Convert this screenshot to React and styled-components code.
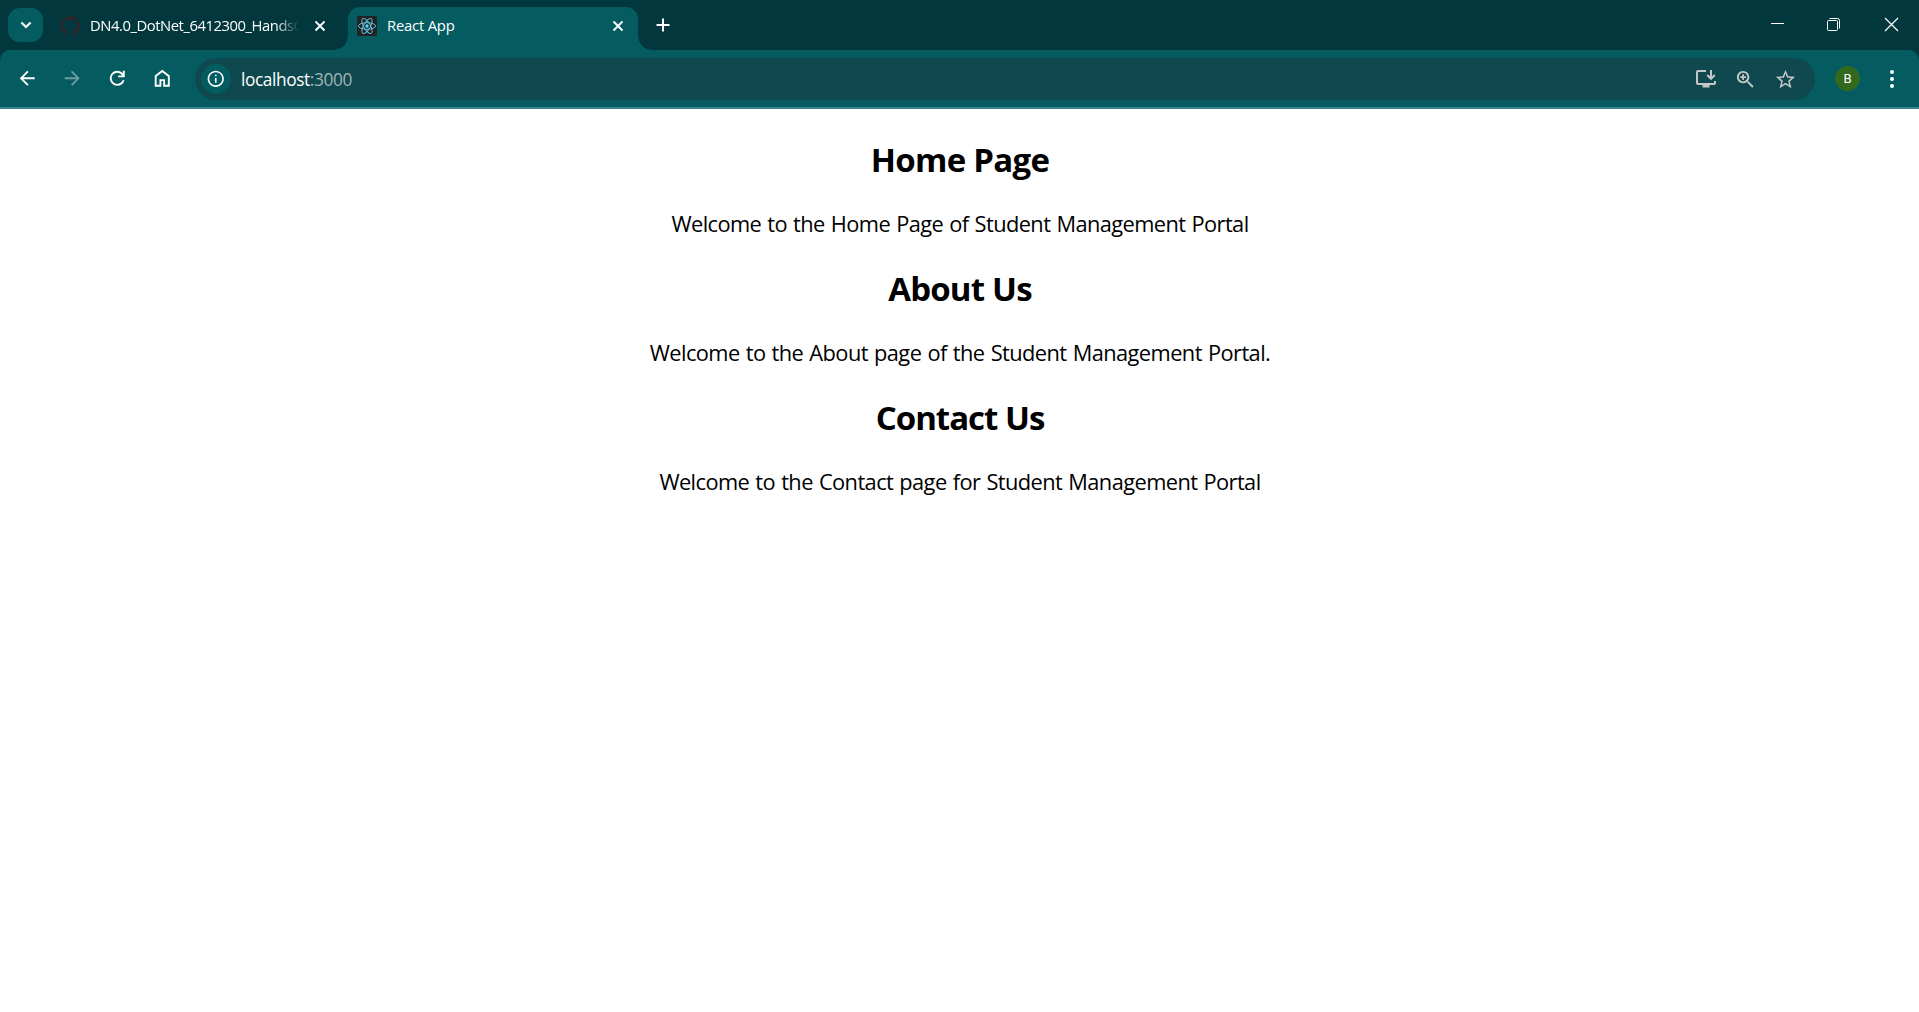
import React from "react";
import styled, { createGlobalStyle, css } from "styled-components";

const FRAME = "#02383d";
const BAR = "#045c61";
const FIELD = "#0f484e";
const UI_FONT = '"Open Sans", "Noto Sans", sans-serif';

const GlobalStyle = createGlobalStyle`
  html, body { margin: 0; background: #fff; }
  * { box-sizing: border-box; }
`;

const Window = styled.div`
  display: flex;
  flex-direction: column;
  width: 100%;
  height: 1012px;
  overflow: hidden;
  font-family: ${UI_FONT};
`;

const TabStrip = styled.div`
  display: flex;
  align-items: flex-start;
  height: 50px;
  flex: none;
  background: ${FRAME};
`;

const TabSearch = styled.button`
  display: grid;
  place-items: center;
  width: 35px;
  height: 34px;
  margin: 8px 0 0 8px;
  padding: 0;
  border: 0;
  border-radius: 12px;
  background: ${BAR};
`;

const Tab = styled.div`
  position: relative;
  display: flex;
  align-items: center;
  flex: none;
  width: ${(p) => p.$width}px;
  height: 43px;
  margin-top: 7px;
  padding: 0 ${(p) => p.$right}px 6px ${(p) => p.$left}px;
  border-radius: 12px 12px 0 0;
  ${(p) =>
    p.$active &&
    css`
      background: ${BAR};
      &::before,
      &::after {
        content: "";
        position: absolute;
        bottom: 0;
        width: 14px;
        height: 14px;
      }
      &::before {
        left: -14px;
        background: radial-gradient(circle at 0 0, transparent 13.5px, ${BAR} 14px);
      }
      &::after {
        right: -14px;
        background: radial-gradient(circle at 100% 0, transparent 13.5px, ${BAR} 14px);
      }
    `}
`;

const TabTitle = styled.span`
  flex: 1;
  min-width: 0;
  margin-left: 10px;
  padding-bottom: 2px;
  overflow: hidden;
  white-space: nowrap;
  font-size: 14.8px;
  line-height: 20px;
  letter-spacing: ${(p) => p.$tracking}px;
  color: #fff;
  ${(p) =>
    p.$fade &&
    css`
      mask-image: linear-gradient(90deg, #000 calc(100% - 24px), transparent);
    `}
`;

const TabClose = styled.button`
  display: grid;
  place-items: center;
  width: 12px;
  height: 12px;
  margin-left: 15px;
  padding: 0;
  border: 0;
  background: none;
`;

const NewTab = styled.button`
  display: grid;
  place-items: center;
  width: 14px;
  height: 14px;
  margin: 18px 0 0 18px;
  padding: 0;
  border: 0;
  background: none;
`;

const WindowControls = styled.div`
  display: flex;
  gap: 43px;
  margin: 17px 20px 0 auto;

  & > :first-child {
    margin-right: -2px;
  }
`;

const ToolbarShell = styled.div`
  flex: none;
  height: 59px;
  background: ${FRAME};
`;

const Toolbar = styled.div`
  display: flex;
  align-items: center;
  height: 59px;
  padding: 0 15px 0 16px;
  border-bottom: 2px solid #37848a;
  border-radius: 10px 10px 0 0;
  background: ${BAR};
`;

const NavGroup = styled.div`
  display: flex;
  gap: 22px;
`;

const NavButton = styled.button`
  display: grid;
  place-items: center;
  width: 23px;
  height: 23px;
  padding: 0;
  border: 0;
  background: none;
  color: ${(p) => (p.$muted ? "#6b9c9f" : "#fff")};
`;

const AddressBar = styled.div`
  display: flex;
  align-items: center;
  flex: 1;
  height: 42px;
  margin: 1px 20px 0 21px;
  padding: 0 18px 0 6px;
  border-radius: 21px;
  background: ${FIELD};
`;

const SiteInfo = styled.div`
  display: grid;
  place-items: center;
  width: 30px;
  height: 30px;
  border-radius: 50%;
  background: ${BAR};
`;

const Url = styled.span`
  flex: 1;
  margin-left: 10px;
  padding-top: 1px;
  font-size: 17.3px;
  line-height: 24px;
  letter-spacing: -0.4px;
  color: #fff;
`;

const Port = styled.span`
  color: #9fb6b8;
`;

const FieldActions = styled.div`
  display: flex;
  align-items: center;
  gap: 17px;
  color: #c4c7c7;
`;

const Avatar = styled.div`
  display: grid;
  place-items: center;
  width: 25px;
  height: 25px;
  border-radius: 50%;
  background: #33691e;
  font: 13px/25px Roboto, sans-serif;
  color: #fff;
`;

const Menu = styled.div`
  display: grid;
  place-items: center;
  width: 24px;
  height: 24px;
  margin-left: 20px;
`;

const Page = styled.main`
  flex: 1;
  padding: 29px 0 0 1px;
  background: #fff;
  text-align: center;
  color: #000;
`;

const Heading = styled.h2`
  margin: 0 0 27px;
  font-size: 33px;
  line-height: 44px;
  font-weight: 700;
  letter-spacing: ${(p) => p.$tracking}px;
`;

const Paragraph = styled.p`
  margin: 0 0 28px;
  font-size: 21.8px;
  line-height: 30px;
  word-spacing: 1px;
  letter-spacing: ${(p) => p.$tracking}px;
`;

const Icon = ({ d, size }) => (
  <svg width={size} height={size} viewBox="0 0 24 24" fill="currentColor">
    <path d={d} />
  </svg>
);

const CloseGlyph = () => (
  <svg width="12" height="12" viewBox="0 0 12 12" stroke="#fff" strokeWidth="1.9">
    <path d="M1.5 1.5 10.5 10.5M10.5 1.5 1.5 10.5" />
  </svg>
);

const GithubMark = () => (
  <svg width="20" height="20" viewBox="0 0 16 16" fill="#24292f">
    <path d="M8 0C3.58 0 0 3.58 0 8c0 3.54 2.29 6.53 5.47 7.59.4.07.55-.17.55-.38 0-.19-.01-.82-.01-1.49-2.01.37-2.53-.49-2.69-.94-.09-.23-.48-.94-.82-1.13-.28-.15-.68-.52-.01-.53.63-.01 1.08.58 1.23.82.72 1.21 1.87.87 2.33.66.07-.52.28-.87.51-1.07-1.78-.2-3.64-.89-3.64-3.95 0-.87.31-1.59.82-2.15-.08-.2-.36-1.02.08-2.12 0 0 .67-.21 2.2.82.64-.18 1.32-.27 2-.27s1.36.09 2 .27c1.53-1.04 2.2-.82 2.2-.82.44 1.1.16 1.92.08 2.12.51.56.82 1.27.82 2.15 0 3.07-1.87 3.75-3.65 3.95.29.25.54.73.54 1.48 0 1.07-.01 1.93-.01 2.2 0 .21.15.46.55.38A8.01 8.01 0 0 0 16 8c0-4.42-3.58-8-8-8z" />
  </svg>
);

const ReactMark = () => (
  <svg width="20" height="20" viewBox="0 0 20 20" fill="none" stroke="#61c4e3" strokeWidth="0.95">
    <rect width="20" height="20" rx="2" fill="#222" stroke="none" />
    <ellipse cx="10" cy="10" rx="8.6" ry="3.3" />
    <ellipse cx="10" cy="10" rx="8.6" ry="3.3" transform="rotate(60 10 10)" />
    <ellipse cx="10" cy="10" rx="8.6" ry="3.3" transform="rotate(120 10 10)" />
    <circle cx="10" cy="10" r="1.7" fill="#61dafb" stroke="none" />
  </svg>
);

const paths = {
  back: "M20 11H7.83l5.59-5.59L12 4l-8 8 8 8 1.41-1.41L7.83 13H20v-2z",
  forward: "M12 4l-1.41 1.41L16.17 11H4v2h12.17l-5.58 5.59L12 20l8-8z",
  reload:
    "M12 20q-3.35 0-5.675-2.325T4 12t2.325-5.675T12 4q1.725 0 3.3.7125T18 6.75V4h2v7h-7V9h4.2q-.8-1.4-2.1875-2.2T12 6Q9.5 6 7.75 7.75T6 12t1.75 4.25T12 18q1.925 0 3.475-1.1T17.65 14h2.1q-.7 2.65-2.85 4.325T12 20z",
  home: "M6 19h3v-6h6v6h3v-9l-6-4.5L6 10v9zm-2 2V9l8-6 8 6v12h-7v-6h-2v6H4z",
  info: "M11 7h2v2h-2zm0 4h2v6h-2zm1-9C6.48 2 2 6.48 2 12s4.48 10 10 10 10-4.48 10-10S17.52 2 12 2zm0 18c-4.41 0-8-3.59-8-8s3.59-8 8-8 8 3.59 8 8-3.59 8-8 8z",
  zoom: "M15.5 14h-.79l-.28-.27C15.41 12.59 16 11.11 16 9.5 16 5.91 13.09 3 9.5 3S3 5.91 3 9.5 5.91 16 9.5 16c1.61 0 3.09-.59 4.23-1.57l.27.28v.79l5 4.99L20.49 19l-4.99-5zm-6 0C7.01 14 5 11.99 5 9.5S7.01 5 9.5 5 14 7.01 14 9.5 11.99 14 9.5 14zM12.5 10.4h-2.1v2.1H8.6v-2.1H6.5V8.6h2.1V6.5h1.8v2.1h2.1z",
  star: "M22 9.24l-7.19-.62L12 2 9.19 8.63 2 9.24l5.46 4.73L5.82 21 12 17.27 18.18 21l-1.63-7.03L22 9.24zM12 15.4l-3.76 2.27 1-4.28-3.32-2.88 4.38-.38L12 6.1l1.71 4.04 4.38.38-3.32 2.88 1 4.28L12 15.4z",
};

const sections = [
  {
    title: "Home Page",
    titleTracking: -0.7,
    text: "Welcome to the Home Page of Student Management Portal",
    textTracking: -0.58,
  },
  {
    title: "About Us",
    titleTracking: -0.8,
    text: "Welcome to the About page of the Student Management Portal.",
    textTracking: -0.56,
  },
  {
    title: "Contact Us",
    titleTracking: -1,
    text: "Welcome to the Contact page for Student Management Portal",
    textTracking: -0.57,
  },
];

export default function App() {
  return (
    <Window>
      <GlobalStyle />
      <TabStrip>
        <TabSearch>
          <svg width="12" height="8" viewBox="0 0 12 8" fill="none" stroke="#fff" strokeWidth="2.1">
            <path d="M1.4 1.4 6 6 10.6 1.4" />
          </svg>
        </TabSearch>
        <Tab $width={305} $left={17} $right={22}>
          <GithubMark />
          <TabTitle $fade $tracking={-0.45}>DN4.0_DotNet_6412300_HandsO</TabTitle>
          <TabClose>
            <CloseGlyph />
          </TabClose>
        </Tab>
        <Tab $active $width={290} $left={9} $right={14}>
          <ReactMark />
          <TabTitle $tracking={-0.2}>React App</TabTitle>
          <TabClose>
            <CloseGlyph />
          </TabClose>
        </Tab>
        <NewTab>
          <svg width="14" height="14" viewBox="0 0 14 14" stroke="#fff" strokeWidth="2">
            <path d="M7 .5V13.5M.5 7H13.5" />
          </svg>
        </NewTab>
        <WindowControls>
          <svg width="15" height="15" viewBox="0 0 15 15" stroke="#fff">
            <path d="M1 6.5H14" />
          </svg>
          <svg width="15" height="15" viewBox="0 0 15 15" fill="none" stroke="#fff">
            <rect x="1.5" y="3.5" width="10" height="10" rx="1" />
            <path d="M3.5 1.5H11.5Q13.5 1.5 13.5 3.5V11.5" />
          </svg>
          <svg width="15" height="15" viewBox="0 0 15 15" stroke="#fff" strokeWidth="1.2">
            <path d="M1 1 14 14M14 1 1 14" />
          </svg>
        </WindowControls>
      </TabStrip>
      <ToolbarShell>
        <Toolbar>
          <NavGroup>
            <NavButton><Icon d={paths.back} size={22.5} /></NavButton>
            <NavButton $muted><Icon d={paths.forward} size={22.5} /></NavButton>
            <NavButton><Icon d={paths.reload} size={22.5} /></NavButton>
            <NavButton><Icon d={paths.home} size={22.5} /></NavButton>
          </NavGroup>
          <AddressBar>
            <SiteInfo>
              <NavButton><Icon d={paths.info} size={19.5} /></NavButton>
            </SiteInfo>
            <Url>
              localhost<Port>:3000</Port>
            </Url>
            <FieldActions>
              <svg width="22" height="18" viewBox="0 0 22 18" fill="none" stroke="currentColor" strokeWidth="2">
                <path d="M11 1H3Q2 1 2 2V13Q2 14 3 14H19Q20 14 20 13V11" />
                <path d="M16 0V8M12.2 5 16 8.8 19.8 5" />
                <path d="M7.5 16H14.5" strokeWidth="3" />
              </svg>
              <Icon d={paths.zoom} size={23} />
              <Icon d={paths.star} size={23} />
            </FieldActions>
          </AddressBar>
          <Avatar>B</Avatar>
          <Menu>
            <svg width="4" height="18" viewBox="0 0 4 18" fill="#fff">
              <circle cx="2" cy="2" r="2" />
              <circle cx="2" cy="9" r="2" />
              <circle cx="2" cy="16" r="2" />
            </svg>
          </Menu>
        </Toolbar>
      </ToolbarShell>
      <Page>
        {sections.map((s) => (
          <section key={s.title}>
            <Heading $tracking={s.titleTracking}>{s.title}</Heading>
            <Paragraph $tracking={s.textTracking}>{s.text}</Paragraph>
          </section>
        ))}
      </Page>
    </Window>
  );
}
